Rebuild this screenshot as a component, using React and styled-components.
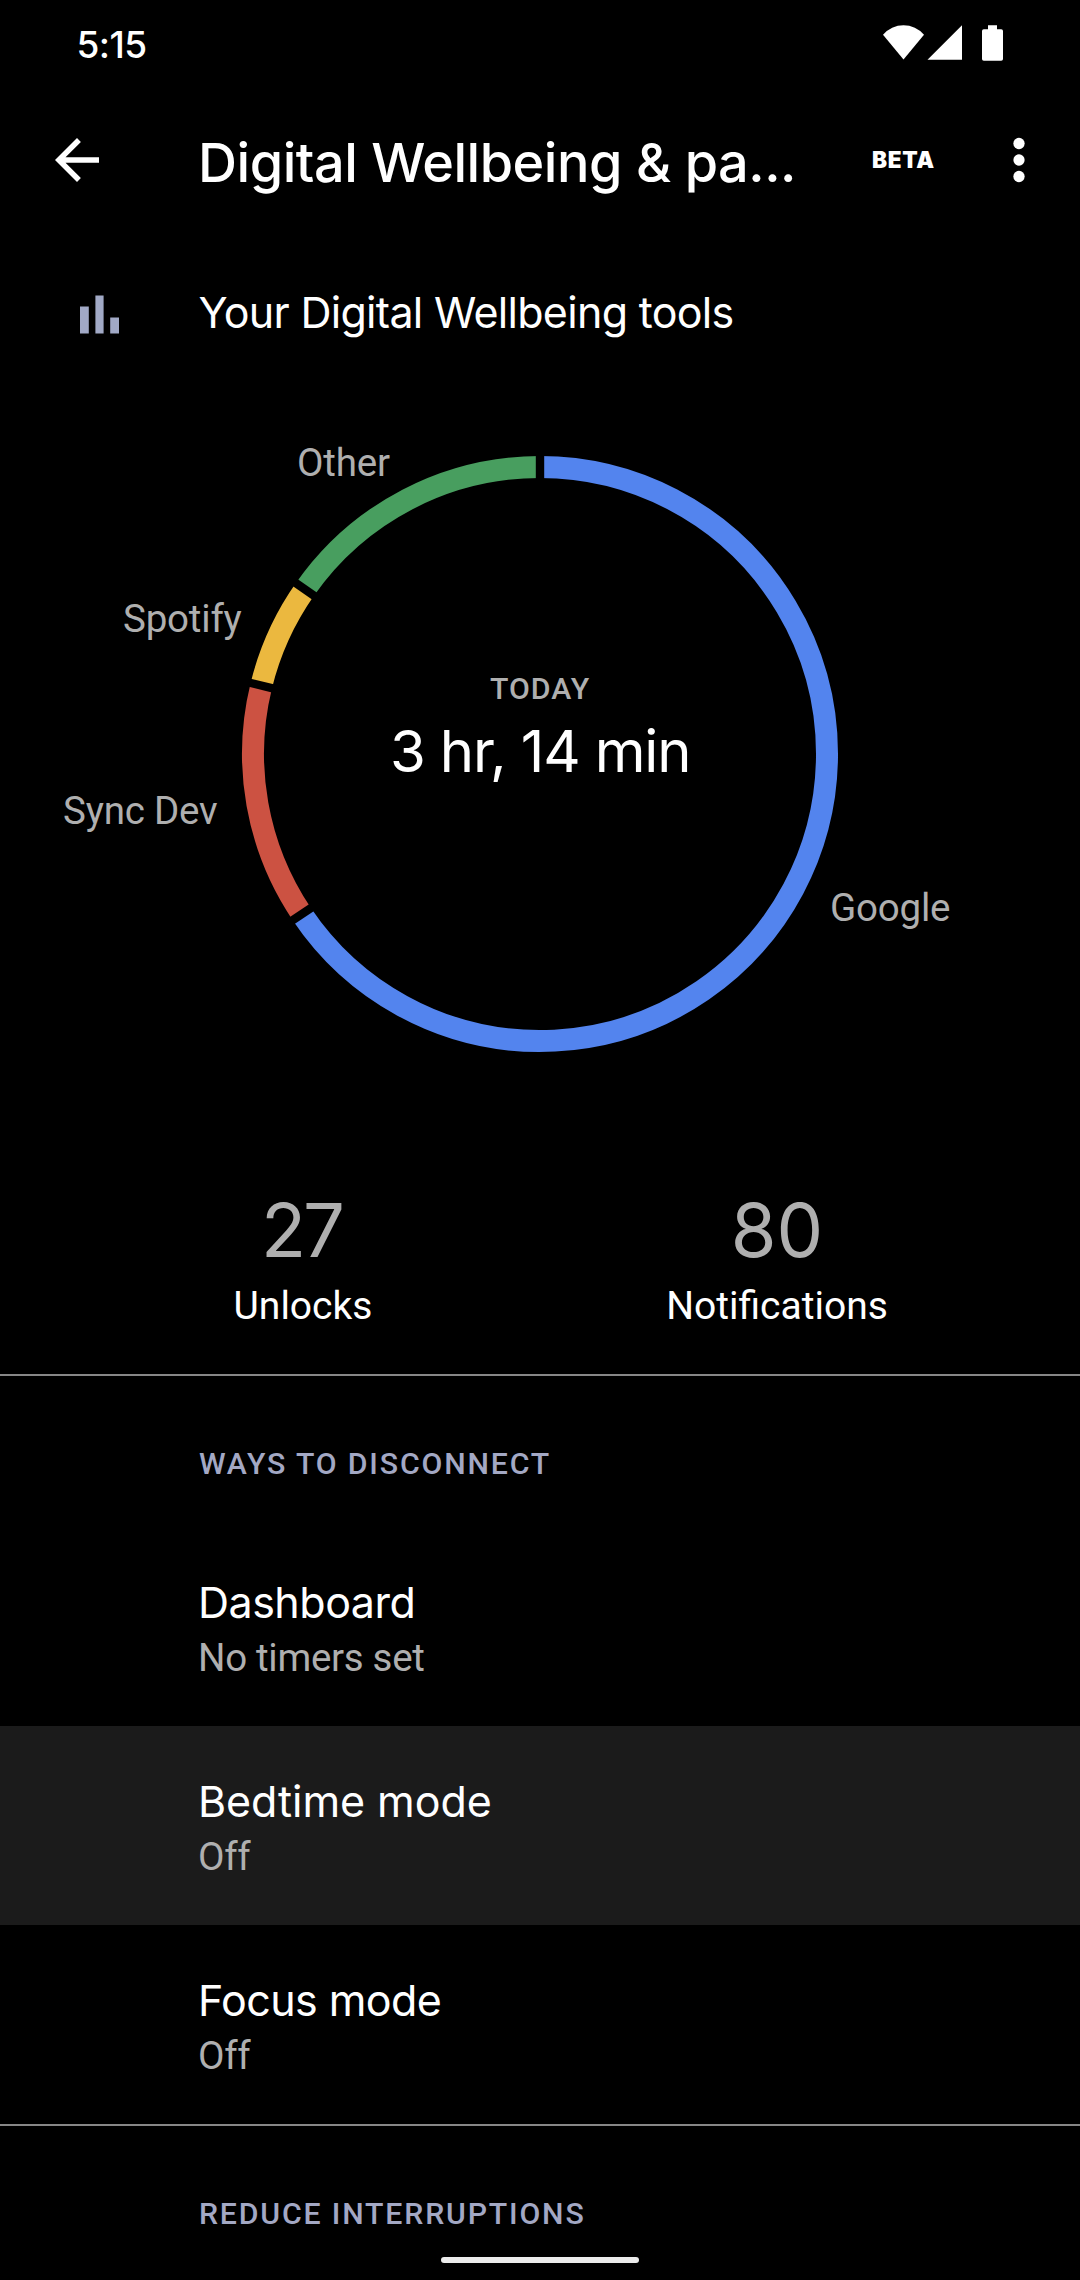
import styled, { createGlobalStyle } from "styled-components";

const CENTER = { x: 540, y: 363 };
const RADIUS = 287;
const THICKNESS = 22;

/* angles in degrees, clockwise from the top */
const usage = [
    { app: "Google", from: 0, to: 236.1, color: "#5384ee", x: 830, y: 530 },
    { app: "Sync Dev", from: 236.1, to: 283.8, color: "#cc5242", x: 63, y: 433 },
    { app: "Spotify", from: 283.8, to: 305, color: "#ebb83f", x: 123, y: 241 },
    { app: "Other", from: 305, to: 360, color: "#489e5f", x: 297, y: 85 },
];

const waysToDisconnect = [
    { title: "Dashboard", summary: "No timers set", tracking: -0.5 },
    { title: "Bedtime mode", summary: "Off", tracking: -0.05, pressed: true },
    { title: "Focus mode", summary: "Off", tracking: -0.6 },
];

function point(angle, r) {
    const rad = (angle * Math.PI) / 180;
    return [CENTER.x + r * Math.sin(rad), CENTER.y - r * Math.cos(rad)];
}

function arc(from, to) {
    const large = to - from > 180 ? 1 : 0;
    return `M${point(from, RADIUS)} A${RADIUS} ${RADIUS} 0 ${large} 1 ${point(to, RADIUS)}`;
}

function separator(angle) {
    return `M${point(angle, RADIUS - 16)} L${point(angle, RADIUS + 16)}`;
}

function StatusIcons() {
    return (
        <svg width="120" height="36" viewBox="0 0 120 36" fill="#fff">
            <path d="M0 9.8A27 27 0 0 1 41 9.8L20.5 34.6Z" />
            <path d="M44.5 34.8H79V0.3Z" />
            <path d="M105 0.3h9v3.9h4.2a1.8 1.8 0 0 1 1.8 1.8v28a1.8 1.8 0 0 1-1.8 1.8h-17.4a1.8 1.8 0 0 1-1.8-1.8v-28a1.8 1.8 0 0 1 1.8-1.8h4.2z" />
        </svg>
    );
}

function UsageChart() {
    return (
        <Chart viewBox="0 0 1080 785">
            {usage.map((u) => (
                <path key={u.app} d={arc(u.from, u.to)} fill="none" stroke={u.color} strokeWidth={THICKNESS} />
            ))}
            {usage.map((u) => (
                <path key={u.app} d={separator(u.from)} stroke="#000" strokeWidth="8.4" />
            ))}
            {usage.map((u) => (
                <AppLabel key={u.app} x={u.x} y={u.y}>{u.app}</AppLabel>
            ))}
            <Today x="490" y="307.6">TODAY</Today>
            <Total x="390" y="381">3 hr, 14 min</Total>
        </Chart>
    );
}

export default function App() {
    return (
        <Screen>
            <GlobalStyle />
            <StatusBar>
                <Clock>5:15</Clock>
                <StatusIcons />
            </StatusBar>

            <AppBar>
                <svg width="66" height="66" viewBox="0 0 24 24" fill="#fff">
                    <path d="M20 11H7.83l5.59-5.59L12 4l-8 8 8 8 1.41-1.41L7.83 13H20v-2z" />
                </svg>
                <Title>Digital Wellbeing &amp; pa...</Title>
                <Beta>BETA</Beta>
                <svg width="66" height="66" viewBox="0 0 24 24" fill="#fff">
                    <circle cx="12" cy="6" r="2.05" />
                    <circle cx="12" cy="12" r="2.05" />
                    <circle cx="12" cy="18" r="2.05" />
                </svg>
            </AppBar>

            <ToolsHeader>
                <svg width="40" height="39" viewBox="0 0 40 39" fill="#a1a9c6">
                    <path d="M0 11.5h8.8v27H0zM15.4 0.5h8.2v38h-8.2zM30.2 22.5h8.8v16h-8.8z" />
                </svg>
                <ToolsTitle>Your Digital Wellbeing tools</ToolsTitle>
            </ToolsHeader>

            <UsageChart />

            <Stats>
                <Stat>
                    <StatNumber $tracking={-3}>27</StatNumber>
                    <StatLabel>Unlocks</StatLabel>
                </Stat>
                <Stat>
                    <StatNumber $tracking={0}>80</StatNumber>
                    <StatLabel>Notifications</StatLabel>
                </Stat>
            </Stats>

            <Section>
                <SectionTitle>WAYS TO DISCONNECT</SectionTitle>
                {waysToDisconnect.map((item) => (
                    <Row key={item.title} $pressed={item.pressed}>
                        <RowTitle $tracking={item.tracking}>{item.title}</RowTitle>
                        <RowSummary>{item.summary}</RowSummary>
                    </Row>
                ))}
            </Section>

            <Section>
                <SectionTitle>REDUCE INTERRUPTIONS</SectionTitle>
            </Section>

            <NavHandle />
        </Screen>
    );
}

const GlobalStyle = createGlobalStyle`
body {
    margin: 0;
    background: #000;
}
`;

const Screen = styled.div`
    --muted: #afafaf;
    --accent: #a3a8c4;
    --display: Inter, "Liberation Sans", sans-serif;
    --body: Roboto, "Liberation Sans", sans-serif;

    position: relative;
    box-sizing: border-box;
    width: 1080px;
    height: 2280px;
    overflow: hidden;
    background: #000;
    color: #fff;
    font-family: var(--body);
    white-space: nowrap;

    svg {
        display: block;
        flex: none;
    }
`;

const StatusBar = styled.div`
    display: flex;
    justify-content: space-between;
    align-items: flex-start;
    box-sizing: border-box;
    height: 83px;
    padding: 25px 77px 0 76.5px;
`;

const Clock = styled.span`
    font-family: var(--display);
    font-size: 37px;
    font-weight: 500;
    line-height: 40px;
    letter-spacing: -0.6px;
`;

const AppBar = styled.header`
    display: flex;
    align-items: center;
    height: 154px;
    padding: 0 28px 0 44px;
`;

const Title = styled.h1`
    flex: 1;
    margin: 0 0 0 88px;
    padding-top: 5px;
    font-family: var(--display);
    font-size: 54px;
    font-weight: 500;
    line-height: 70px;
    letter-spacing: -0.47px;
`;

const Beta = styled.span`
    width: 114px;
    font-family: var(--display);
    font-size: 22.5px;
    font-weight: 900;
    line-height: 28px;
    letter-spacing: 0.7px;
`;

const ToolsHeader = styled.div`
    display: flex;
    align-items: center;
    height: 154px;
    padding-left: 79.5px;
`;

const ToolsTitle = styled.h2`
    margin: 0 0 4px 79px;
    font-family: var(--display);
    font-size: 43px;
    font-weight: 400;
    line-height: 56px;
    letter-spacing: -0.7px;
`;

const Chart = styled.svg`
    width: 1080px;
    height: 785px;
`;

const AppLabel = styled.text`
    fill: var(--muted);
    font-size: 38.5px;
    letter-spacing: -0.2px;
`;

const Today = styled.text`
    fill: var(--muted);
    font-size: 30.25px;
    font-weight: 500;
    letter-spacing: 1px;
`;

const Total = styled.text`
    fill: #fff;
    font-family: var(--display);
    font-size: 58px;
    letter-spacing: -1.15px;
`;

const Stats = styled.div`
    display: grid;
    grid-template-columns: 1fr 1fr;
    box-sizing: border-box;
    height: 198px;
    padding: 14px 66px 0;
`;

const Stat = styled.div`
    display: flex;
    flex-direction: column;
    align-items: center;
    gap: 13px;
`;

const StatNumber = styled.span`
    margin-left: ${(p) => p.$tracking}px;
    color: var(--muted);
    font-family: var(--display);
    font-size: 74px;
    line-height: 80px;
    letter-spacing: ${(p) => p.$tracking}px;
`;

/* no tracking here, it would break the fi ligature */
const StatLabel = styled.span`
    font-size: 39px;
    line-height: 46px;
`;

const Section = styled.section`
    border-top: 2px solid #868686;
`;

const SectionTitle = styled.h3`
    box-sizing: border-box;
    height: 151px;
    margin: 0;
    padding: 68px 0 0 199px;
    color: var(--accent);
    font-size: 30.25px;
    font-weight: 500;
    line-height: 40px;
    letter-spacing: 1.83px;
`;

const Row = styled.div`
    box-sizing: border-box;
    height: 199px;
    padding: 43px 0 0 198px;
    background: ${(p) => (p.$pressed ? "#1b1b1b" : "transparent")};
`;

const RowTitle = styled.div`
    font-family: var(--display);
    font-size: 43px;
    line-height: 64px;
    letter-spacing: ${(p) => p.$tracking}px;
`;

const RowSummary = styled.div`
    color: var(--muted);
    font-size: 38.5px;
    line-height: 47px;
    letter-spacing: -0.3px;
`;

const NavHandle = styled.div`
    position: absolute;
    bottom: 17px;
    left: 441px;
    width: 198px;
    height: 6px;
    border-radius: 3px;
    background: #ebebeb;
`;
